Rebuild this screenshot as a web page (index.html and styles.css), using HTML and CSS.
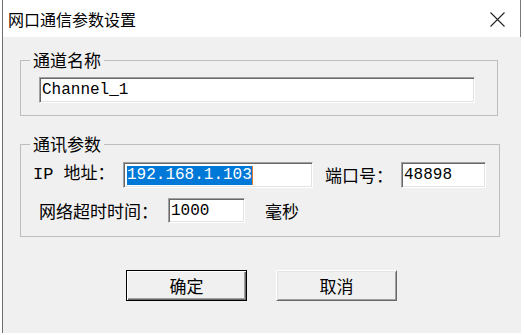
FILE: index.html
```html
<!DOCTYPE html>
<html lang="zh-CN">
<head>
    <meta charset="UTF-8">
    <meta name="viewport" content="width=device-width, initial-scale=1.0">
    <title>网口通信参数设置</title>
    <link rel="stylesheet" href="styles.css">
</head>
<body>
    <div class="window">
        <!-- Title bar -->
        <div class="titlebar">
            <span class="title">网口通信参数设置</span>
            <svg class="close" width="15" height="15" viewBox="0 0 15 15">
                <path d="M0.5 0.5 L14.5 14.5 M14.5 0.5 L0.5 14.5" stroke="#222" stroke-width="1.1" fill="none"/>
            </svg>
        </div>

        <div class="client">
            <!-- Channel name -->
            <fieldset class="group group-name">
                <legend>通道名称</legend>
                <div class="edit edit-name">Channel_1</div>
            </fieldset>

            <!-- Communication parameters -->
            <fieldset class="group group-comm">
                <legend>通讯参数</legend>
                <div class="row">
                    <span class="label label-ip">IP 地址：</span>
                    <div class="edit edit-ip"><span class="sel">192.168.1.103</span><span class="caret"></span></div>
                    <span class="label label-port">端口号：</span>
                    <div class="edit edit-port">48898</div>
                </div>
                <div class="row row-timeout">
                    <span class="label label-timeout">网络超时时间：</span>
                    <div class="edit edit-timeout">1000</div>
                    <span class="label unit">毫秒</span>
                </div>
            </fieldset>

            <!-- Buttons -->
            <div class="buttons">
                <button class="btn btn-default">确定</button>
                <button class="btn">取消</button>
            </div>
        </div>
    </div>
</body>
</html>
```

FILE: styles.css
```css
/* Basic Reset */
* {
    margin: 0;
    padding: 0;
    box-sizing: border-box;
}

body {
    background-color: #ffffff;
    font-family: "Liberation Mono", "Noto Sans CJK SC", monospace;
    color: #000000;
}

/* Window frame */
.window {
    margin-left: 2px;
    width: 519px;
    height: 333px;
    border-left: 1px solid #6f6f6f;
    display: flex;
    flex-direction: column;
}

/* Title bar */
.titlebar {
    height: 37px;
    flex: none;
    display: flex;
    align-items: center;
    justify-content: space-between;
    padding: 0 15px 0 5px;
    background-color: #ffffff;
    border-right: 1px solid #7a7a7a;
}

.title {
    font-family: "Noto Sans CJK SC", sans-serif;
    font-size: 16px;
    line-height: 18px;
}

.close {
    display: block;
    margin-top: 1px;
}

/* Client area */
.client {
    flex: 1;
    background-color: #f0f0f0;
    padding-top: 14px;
}

/* Group boxes */
.group {
    margin-left: 17px;
    border: 1px solid #bdbdbd;
    min-width: 0;
}

.group legend {
    margin-left: -9px;
    padding: 0 3px;
    font-family: "Noto Sans CJK SC", sans-serif;
    font-size: 17px;
    line-height: 18px;
}

.group-name {
    width: 478px;
    padding: 8px 18px 12px 18px;
}

.group-comm {
    width: 480px;
    margin-top: 19px;
    padding: 9px 12px 13px 12px;
}

.group-comm legend {
    margin-left: -3px;
}

/* Rows */
.row {
    display: flex;
    align-items: center;
    height: 26px;
}

.row-timeout {
    margin-top: 10px;
    height: 25px;
}

.label {
    font-size: 17px;
    line-height: 18px;
    white-space: nowrap;
}

.label-ip {
    width: 90px;
}

.label-port {
    width: 76px;
    margin-left: 12px;
    font-family: "Noto Sans CJK SC", sans-serif;
}

.label-timeout {
    width: 129px;
    margin-left: 6px;
    font-family: "Noto Sans CJK SC", sans-serif;
}

.unit {
    margin-left: 20px;
    font-family: "Noto Sans CJK SC", sans-serif;
}

/* Sunken edit boxes */
.edit {
    height: 26px;
    padding: 0 2px;
    background-color: #ffffff;
    border: 1px solid;
    border-color: #a0a0a0 #ffffff #ffffff #a0a0a0;
    box-shadow: inset 1px 1px 0 #696969, inset -1px -1px 0 #e3e3e3;
    font-family: "Liberation Mono", monospace;
    font-size: 16px;
    line-height: 24px;
    white-space: nowrap;
    display: flex;
    align-items: center;
}

.edit-name {
    width: 436px;
}

.edit-ip {
    width: 190px;
    padding-left: 3px;
}

.edit-port {
    width: 85px;
}

.edit-timeout {
    width: 77px;
    height: 25px;
}

.sel {
    background-color: #0078d7;
    color: #ffffff;
    line-height: 19px;
}

.caret {
    width: 1px;
    height: 19px;
    background-color: #e07a2c;
}

/* Buttons */
.buttons {
    display: flex;
    gap: 29px;
    margin-top: 33px;
    padding-left: 123px;
}

.btn {
    width: 121px;
    height: 31px;
    background-color: #f0f0f0;
    border: 1px solid;
    border-color: #ffffff #696969 #696969 #ffffff;
    box-shadow: inset 1px 1px 0 #e3e3e3, inset -1px -1px 0 #a0a0a0;
    font-family: "Noto Sans CJK SC", sans-serif;
    font-size: 17px;
    line-height: 18px;
    color: #000000;
    cursor: pointer;
}

.btn-default {
    border-color: #000000;
    box-shadow: inset 1px 1px 0 #ffffff, inset -1px -1px 0 #696969, inset -2px -2px 0 #a0a0a0;
}
```
